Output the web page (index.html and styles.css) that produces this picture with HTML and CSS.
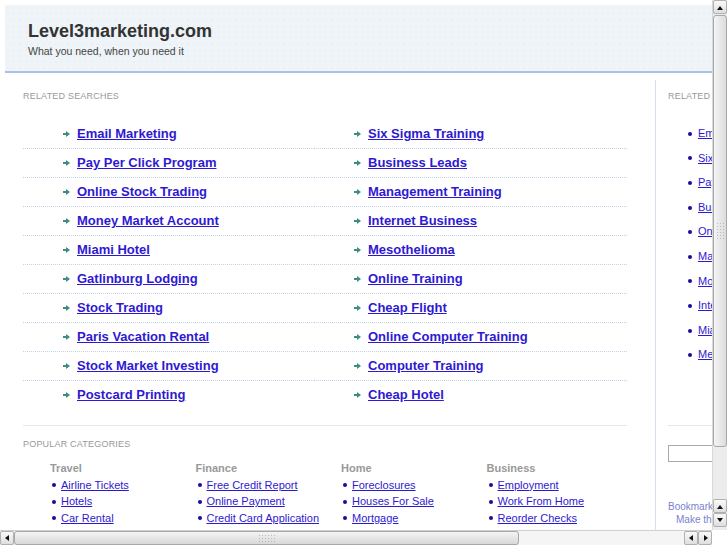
FILE: index.html
```html
<!DOCTYPE html>
<html>
<head>
	<meta charset="utf-8">
	<title>Level3marketing.com</title>
	<link rel="stylesheet" href="styles.css">
</head>
<body>
	<div class="screen">
		<div class="viewport">
			<div class="page">
				<div class="header">
					<h1>Level3marketing.com</h1>
					<p>What you need, when you need it</p>
				</div>
				<div class="wrap">
					<div class="main">
						<h2>Related Searches</h2>
						<div class="searches">
							<div class="cell"><i class="arr"></i><a href="#" class="first">Email Marketing</a></div>
							<div class="cell"><i class="arr"></i><a href="#">Six Sigma Training</a></div>
							<div class="cell"><i class="arr"></i><a href="#">Pay Per Click Program</a></div>
							<div class="cell"><i class="arr"></i><a href="#">Business Leads</a></div>
							<div class="cell"><i class="arr"></i><a href="#">Online Stock Trading</a></div>
							<div class="cell"><i class="arr"></i><a href="#">Management Training</a></div>
							<div class="cell"><i class="arr"></i><a href="#">Money Market Account</a></div>
							<div class="cell"><i class="arr"></i><a href="#">Internet Business</a></div>
							<div class="cell"><i class="arr"></i><a href="#">Miami Hotel</a></div>
							<div class="cell"><i class="arr"></i><a href="#">Mesothelioma</a></div>
							<div class="cell"><i class="arr"></i><a href="#">Gatlinburg Lodging</a></div>
							<div class="cell"><i class="arr"></i><a href="#">Online Training</a></div>
							<div class="cell"><i class="arr"></i><a href="#">Stock Trading</a></div>
							<div class="cell"><i class="arr"></i><a href="#">Cheap Flight</a></div>
							<div class="cell"><i class="arr"></i><a href="#">Paris Vacation Rental</a></div>
							<div class="cell"><i class="arr"></i><a href="#">Online Computer Training</a></div>
							<div class="cell"><i class="arr"></i><a href="#">Stock Market Investing</a></div>
							<div class="cell"><i class="arr"></i><a href="#">Computer Training</a></div>
							<div class="cell last"><i class="arr"></i><a href="#">Postcard Printing</a></div>
							<div class="cell last"><i class="arr"></i><a href="#">Cheap Hotel</a></div>
						</div>
						<h2 class="popTitle">Popular Categories</h2>
						<div class="cats">
							<div class="cat">
								<h3>Travel</h3>
								<ul>
									<li><a href="#">Airline Tickets</a></li>
									<li><a href="#">Hotels</a></li>
									<li><a href="#">Car Rental</a></li>
								</ul>
							</div>
							<div class="cat">
								<h3>Finance</h3>
								<ul>
									<li><a href="#">Free Credit Report</a></li>
									<li><a href="#">Online Payment</a></li>
									<li><a href="#">Credit Card Application</a></li>
								</ul>
							</div>
							<div class="cat">
								<h3>Home</h3>
								<ul>
									<li><a href="#">Foreclosures</a></li>
									<li><a href="#">Houses For Sale</a></li>
									<li><a href="#">Mortgage</a></li>
								</ul>
							</div>
							<div class="cat">
								<h3>Business</h3>
								<ul>
									<li><a href="#">Employment</a></li>
									<li><a href="#">Work From Home</a></li>
									<li><a href="#">Reorder Checks</a></li>
								</ul>
							</div>
						</div>
					</div>
					<div class="side">
						<h2>Related Searches</h2>
						<ul class="sideList">
							<li><a href="#">Email Marketing</a></li>
							<li><a href="#">Six Sigma Training</a></li>
							<li><a href="#">Pay Per Click Program</a></li>
							<li><a href="#">Business Leads</a></li>
							<li><a href="#">Online Stock Trading</a></li>
							<li><a href="#">Management Training</a></li>
							<li><a href="#">Money Market Account</a></li>
							<li><a href="#">Internet Business</a></li>
							<li><a href="#">Miami Hotel</a></li>
							<li><a href="#">Mesothelioma</a></li>
						</ul>
						<div class="search">
							<input type="text">
						</div>
						<p class="bookmark">Bookmark this page</p>
						<p class="homepage">Make this your homepage</p>
					</div>
				</div>
			</div>
		</div>
		<div class="vbar">
			<span class="btn up"></span>
			<span class="thumb"><b class="grip"></b></span>
			<span class="track"></span>
			<span class="btn up"></span>
			<span class="btn down"></span>
		</div>
		<div class="hbar">
			<span class="btn left"></span>
			<span class="thumb"><b class="grip"></b></span>
			<span class="track"></span>
			<span class="btn left"></span>
			<span class="btn right"></span>
		</div>
		<div class="corner"></div>
	</div>
</body>
</html>
```
FILE: styles.css
```css
*{
	margin: 0px;
	padding: 0px;
}
body{
	font-family: "Liberation Sans", Arial, sans-serif;
	background-color: white;
}
a{
	color: #2e19d2;
}
ul{
	list-style-type: none;
}
.screen{
	display: grid;
	grid-template-columns: 712px 15px;
	grid-template-rows: 530px 15px;
	width: 727px;
	height: 545px;
}
.viewport{
	overflow: hidden;
}
.page{
	width: 940px;
	padding: 5px 0 0 5px;
}
.header{
	height: 68px;
	padding: 15px 0 0 23px;
	box-sizing: border-box;
	background-color: #eef4f7;
	background-image: radial-gradient(#e3ebf0 0.6px, transparent 0.8px);
	background-size: 6px 6px;
	border-bottom: 2px solid #a9c1e7;
}
.header h1{
	font-size: 18px;
	line-height: 22px;
	color: #333;
}
.header p{
	font-size: 10.5px;
	line-height: 14px;
	margin-top: 2px;
	color: #444;
}
.wrap{
	display: flex;
}
.main{
	width: 604px;
	padding: 0 28px 0 18px;
}
h2{
	font-size: 9px;
	font-weight: normal;
	text-transform: uppercase;
	color: #999;
	letter-spacing: 0.2px;
	line-height: 12px;
	margin-top: 17px;
}
.searches{
	display: grid;
	grid-template-columns: 291px 313px;
	margin-top: 18px;
	border-bottom: 1px solid #dfe8f3;
	padding-bottom: 15px;
}
.cell{
	display: flex;
	align-items: center;
	height: 28px;
	padding-left: 40px;
	border-bottom: 1px dotted #c2d2e8;
}
.cell.last{
	border-bottom-color: transparent;
}
.cell a{
	font-size: 13px;
	font-weight: bold;
	line-height: 16px;
}
.arr{
	width: 7px;
	height: 6px;
	margin-right: 7px;
	background: linear-gradient(#3c8d82, #3c8d82) 0 2px / 4px 2px no-repeat;
	position: relative;
}
.arr:after{
	content: "";
	position: absolute;
	left: 3px;
	top: 0px;
	border-left: 4px solid #3c8d82;
	border-top: 3px solid transparent;
	border-bottom: 3px solid transparent;
}
.popTitle{
	margin-top: 12px;
}
.cats{
	display: grid;
	grid-template-columns: repeat(4, 145.5px);
	padding-left: 27px;
	margin-top: 11px;
	font-size: 11px;
}
.cat h3{
	font-size: 11px;
	color: #999;
	line-height: 14px;
}
.cat ul{
	margin-top: 1.5px;
}
.cat li, .sideList li{
	display: flex;
	align-items: center;
	line-height: 16.5px;
}
.cat li:before, .sideList li:before{
	content: "";
	width: 4px;
	height: 4px;
	border-radius: 50%;
	background-color: #1d0a9a;
	margin: 1px 5px 0 2px;
}
.side{
	margin-top: 7px;
	padding-left: 12px;
	border-left: 1px solid #d3dff0;
	width: 200px;
	height: 460px;
}
.side h2{
	margin-top: 10px;
}
.sideList{
	margin-top: 19px;
	font-size: 11px;
	border-bottom: 1px solid #dfe8f3;
	padding-bottom: 58px;
}
.sideList li{
	line-height: 24.6px;
}
.sideList li:before{
	margin-right: 6px;
	margin-left: 20px;
}
.search{
	margin-top: 18px;
}
.search input{
	width: 150px;
	height: 17px;
	border: 1px solid #aaa;
	box-sizing: border-box;
}
.bookmark, .homepage{
	font-size: 10px;
	color: #7a7fd0;
	line-height: 13px;
}
.bookmark{
	margin-top: 38px;
}
.homepage{
	padding-left: 8px;
}
.vbar, .hbar{
	display: flex;
	background-color: #ececec;
}
.vbar{
	flex-direction: column;
	border-left: 1px solid #d8d8d8;
}
.hbar{
	border-top: 1px solid #d0d0d0;
}
.btn{
	position: relative;
	flex: none;
	width: 14px;
	height: 14px;
	box-sizing: border-box;
	border: 1px solid #b0b0b0;
	border-radius: 2px;
	background: linear-gradient(#fafafa, #dedede);
}
.btn:after{
	content: "";
	position: absolute;
	left: 3px;
	top: 4px;
	border: 3px solid transparent;
}
.up:after{
	top: 2px;
	border-bottom: 4px solid #111;
}
.down:after{
	top: 4px;
	border-top: 4px solid #111;
}
.left:after{
	left: 1px;
	top: 3px;
	border-right: 4px solid #111;
}
.right:after{
	left: 5px;
	top: 3px;
	border-left: 4px solid #111;
}
.vbar .thumb{
	height: 432px;
	width: 14px;
	margin-top: 1px;
}
.vbar .track{
	flex: 1;
}
.vbar .down{
	margin-bottom: 3px;
}
.thumb{
	display: flex;
	align-items: center;
	justify-content: center;
	box-sizing: border-box;
	border: 1px solid #a8a8a8;
	border-radius: 3px;
	background: linear-gradient(to right, #f4f4f4, #dcdcdc);
	flex: none;
}
.hbar .thumb{
	width: 505px;
	height: 14px;
	background: linear-gradient(#f4f4f4, #d8d8d8);
}
.hbar .track{
	flex: 1;
	background-color: #f5f5f5;
}
.grip{
	width: 9px;
	height: 18px;
	background-image: radial-gradient(#b8b8b8 0.8px, transparent 1px);
	background-size: 3px 3px;
}
.hbar .grip{
	width: 18px;
	height: 9px;
}
.corner{
	background-color: white;
}
```
